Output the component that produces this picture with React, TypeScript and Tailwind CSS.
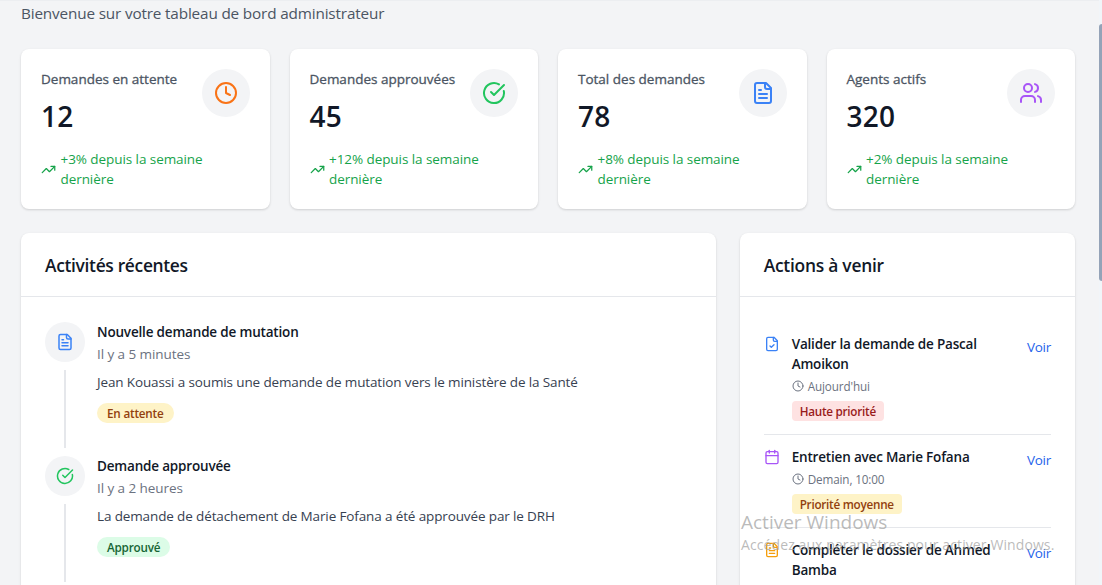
import React from "react";

type IconProps = { className?: string; children: React.ReactNode };

function Icon({ className, children }: IconProps) {
  return (
    <svg viewBox="0 0 24 24" fill="none" stroke="currentColor" strokeWidth={2} strokeLinecap="round" strokeLinejoin="round" className={className}>
      {children}
    </svg>
  );
}

const Clock = ({ className }: { className?: string }) => (
  <Icon className={className}>
    <circle cx="12" cy="12" r="10" />
    <path d="M12 6v6l4 2" />
  </Icon>
);
const CheckCircle = ({ className }: { className?: string }) => (
  <Icon className={className}>
    <path d="M21.801 10A10 10 0 1 1 17 3.335" />
    <path d="m9 11 3 3L22 4" />
  </Icon>
);
const FileText = ({ className }: { className?: string }) => (
  <Icon className={className}>
    <path d="M15 2H6a2 2 0 0 0-2 2v16a2 2 0 0 0 2 2h12a2 2 0 0 0 2-2V7Z" />
    <path d="M14 2v4a2 2 0 0 0 2 2h4" />
    <path d="M10 9H8" />
    <path d="M16 13H8" />
    <path d="M16 17H8" />
  </Icon>
);
const FileCheck = ({ className }: { className?: string }) => (
  <Icon className={className}>
    <path d="M15 2H6a2 2 0 0 0-2 2v16a2 2 0 0 0 2 2h12a2 2 0 0 0 2-2V7Z" />
    <path d="M14 2v4a2 2 0 0 0 2 2h4" />
    <path d="m9 15 2 2 4-4" />
  </Icon>
);
const Users = ({ className }: { className?: string }) => (
  <Icon className={className}>
    <path d="M16 21v-2a4 4 0 0 0-4-4H6a4 4 0 0 0-4 4v2" />
    <circle cx="9" cy="7" r="4" />
    <path d="M22 21v-2a4 4 0 0 0-3-3.87" />
    <path d="M16 3.13a4 4 0 0 1 0 7.75" />
  </Icon>
);
const Calendar = ({ className }: { className?: string }) => (
  <Icon className={className}>
    <path d="M8 2v4" />
    <path d="M16 2v4" />
    <rect width="18" height="18" x="3" y="4" rx="2" />
    <path d="M3 10h18" />
  </Icon>
);
const TrendingUp = ({ className }: { className?: string }) => (
  <Icon className={className}>
    <path d="M22 7 13.5 15.5 8.5 10.5 2 17" />
    <path d="M16 7h6v6" />
  </Icon>
);

const stats = [
  { label: "Demandes en attente", value: "12", trend: "+3%", icon: <Clock className="size-6 text-[#f97316]" /> },
  { label: "Demandes approuvées", value: "45", trend: "+12%", icon: <CheckCircle className="size-6 text-[#22c55e]" /> },
  { label: "Total des demandes", value: "78", trend: "+8%", icon: <FileText className="size-6 text-[#3b82f6]" /> },
  { label: "Agents actifs", value: "320", trend: "+2%", icon: <Users className="size-6 text-[#a855f7]" /> },
];

const activities = [
  {
    title: "Nouvelle demande de mutation",
    time: "Il y a 5 minutes",
    text: "Jean Kouassi a soumis une demande de mutation vers le ministère de la Santé",
    badge: "En attente",
    badgeClass: "bg-[#fef3c7] text-[#92400e]",
    icon: <FileText className="size-[18px] text-[#3b82f6]" />,
  },
  {
    title: "Demande approuvée",
    time: "Il y a 2 heures",
    text: "La demande de détachement de Marie Fofana a été approuvée par le DRH",
    badge: "Approuvé",
    badgeClass: "bg-[#dcfce7] text-[#166534]",
    icon: <CheckCircle className="size-[18px] text-[#22c55e]" />,
  },
];

const actions = [
  {
    title: "Valider la demande de Pascal Amoikon",
    time: "Aujourd'hui",
    badge: "Haute priorité",
    badgeClass: "bg-[#fee2e2] text-[#991b1b]",
    icon: <FileCheck className="size-4 text-[#3b82f6]" />,
  },
  {
    title: "Entretien avec Marie Fofana",
    time: "Demain, 10:00",
    badge: "Priorité moyenne",
    badgeClass: "bg-[#fef3c7] text-[#92400e]",
    icon: <Calendar className="size-4 text-[#a855f7]" />,
  },
  {
    title: "Compléter le dossier de Ahmed Bamba",
    icon: <FileText className="size-4 text-[#f59e0b]" />,
  },
];

const card = "rounded-lg bg-white shadow-[0_1px_3px_rgba(0,0,0,0.1),0_1px_2px_rgba(0,0,0,0.06)]";

export default function App() {
  return (
    <div className="relative flex h-[585px] w-[1102px] overflow-hidden bg-[#f3f4f6] font-['Open_Sans','Noto_Sans',sans-serif] text-[#111827]">
      <main className="w-[1099px] border-t border-[#eceef1] pl-[21px] pr-[24px]">
        <p className="pb-px text-[15.3px] leading-6 tracking-[-0.16px] text-[#4b5563]">Bienvenue sur votre tableau de bord administrateur</p>

        <section className="mt-[23px] grid grid-cols-4 gap-5">
          {stats.map((s) => (
            <div key={s.label} className={`${card} h-40 p-5`}>
              <div className="flex h-[70px] justify-between">
                <div>
                  <p className="pb-px text-[13.5px] font-medium leading-5 whitespace-nowrap text-[#4b5563] [-webkit-text-stroke:0.3px]">{s.label}</p>
                  <p className="mt-2 text-[28px] font-semibold leading-9 tracking-[0.3px]">{s.value}</p>
                </div>
                <div className="flex size-12 shrink-0 items-center justify-center rounded-full bg-[#f3f4f6]">{s.icon}</div>
              </div>
              <div className="mt-[10px] flex items-center text-[13.5px] leading-5 tracking-[-0.07px] text-[#16a34a]">
                <TrendingUp className="mr-[4.5px] size-[15px] shrink-0" />
                <span>{s.trend} depuis la semaine<br />dernière</span>
              </div>
            </div>
          ))}
        </section>

        <section className="mt-6 grid grid-cols-3 gap-6">
          <div className={`${card} col-span-2 h-[500px]`}>
            <h2 className="h-16 border-b border-[#e5e7eb] px-6 pt-[18px] text-[17.4px] font-semibold leading-7 tracking-[-0.32px]">Activités récentes</h2>
            <div className="px-6 pt-[25px]">
              {activities.map((a) => (
                <div key={a.title} className="flex h-[134px]">
                  <div className="flex w-10 shrink-0 flex-col items-center">
                    <div className="flex size-10 items-center justify-center rounded-full bg-[#f3f4f6]">{a.icon}</div>
                    <div className="mt-2 h-[78px] w-0.5 bg-[#e5e7eb]" />
                  </div>
                  <div className="ml-3 flex flex-col items-start whitespace-nowrap">
                    <h3 className="text-[13.5px] font-semibold leading-5 tracking-[-0.18px]">{a.title}</h3>
                    <p className="mt-0.5 text-[13.5px] leading-5 tracking-[-0.07px] text-[#6b7280]">{a.time}</p>
                    <p className="mt-2 text-[13.5px] leading-5 tracking-[-0.13px] text-[#374151]">{a.text}</p>
                    <span className={`${a.badgeClass} mt-[11px] rounded-full px-2.5 pt-px text-[11.7px] font-semibold leading-[19px] tracking-[-0.2px]`}>{a.badge}</span>
                  </div>
                </div>
              ))}
            </div>
          </div>

          <div className={`${card} h-[500px]`}>
            <h2 className="h-16 border-b border-[#e5e7eb] px-6 pt-[18px] text-[17.4px] font-semibold leading-7 tracking-[-0.24px]">Actions à venir</h2>
            <div className="px-6 pt-[25px]">
              {actions.map((a) => (
                <div key={a.title} className="flex border-b border-[#e5e7eb] pt-3 pb-[13px]">
                  <div className="mt-0.5 w-7 shrink-0">{a.icon}</div>
                  <div className="flex flex-1 flex-col items-start">
                    <h3 className="w-[205px] text-[13.5px] font-semibold leading-5 tracking-[-0.18px]">{a.title}</h3>
                    {a.time && (
                      <p className="mt-[3px] flex items-center text-[11.7px] leading-[18px] tracking-[-0.12px] text-[#6b7280]">
                        <Clock className="mr-1 size-3" />
                        {a.time}
                      </p>
                    )}
                    {a.badge && (
                      <span className={`${a.badgeClass} mt-[6px] rounded px-2 pt-px text-[11.7px] font-semibold leading-[19px] tracking-[-0.25px]`}>{a.badge}</span>
                    )}
                  </div>
                  <a className="mt-[3px] text-[13.5px] leading-5 tracking-[-0.25px] text-[#2563eb]">Voir</a>
                </div>
              ))}
            </div>
          </div>
        </section>
      </main>

      <div className="w-[3px] bg-[#f1f5f9] pt-6">
        <div className="h-[257px] rounded-l-[3px] bg-[#94a3b8]" />
      </div>

      <div className="absolute left-[741px] top-[510px] whitespace-nowrap text-[#9d9d9d]/70">
        <p className="text-[19px] leading-6">Activer Windows</p>
        <p className="pt-px text-[14px] leading-5 tracking-[0.1px]">Accédez aux paramètres pour activer Windows.</p>
      </div>
    </div>
  );
}
